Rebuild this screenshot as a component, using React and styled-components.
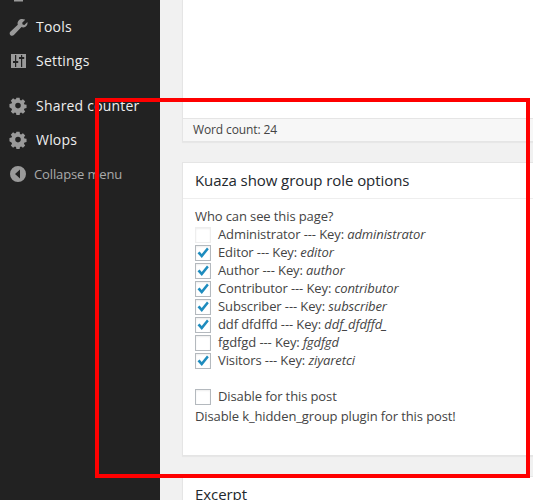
import React from "react";
import styled, { createGlobalStyle } from "styled-components";

const Global = createGlobalStyle`
  html, body {
    margin: 0;
    padding: 0;
    background: #f1f1f1;
  }
  #root {
    height: 500px;
    overflow: hidden;
  }
`;

const Page = styled.div`
  position: relative;
  display: flex;
  width: 533px;
  height: 500px;
  overflow: hidden;
  font-family: "Open Sans", sans-serif;
  font-size: 13px;
  line-height: 18px;
  letter-spacing: -0.11px;
  color: #444;
  background: #f1f1f1;
`;

const Sidebar = styled.nav`
  display: flex;
  flex-direction: column;
  flex: none;
  width: 160px;
  height: 500px;
  padding-top: 10px;
  box-sizing: border-box;
  background: #222;
`;

const MenuItem = styled.div`
  display: flex;
  align-items: center;
  height: 34px;
  margin-top: ${props => props.offset || "0"};
  padding-left: 8px;
  font-size: 14px;
  letter-spacing: 0.2px;
  color: #eee;
`;

const Collapse = styled(MenuItem)`
  font-size: 13px;
  letter-spacing: -0.13px;
  color: #aaa;
`;

const IconSlot = styled.svg`
  flex: none;
  width: 20px;
  height: 20px;
  margin-right: 8px;
  fill: #9a9a9a;
`;

const CollapseIcon = styled(IconSlot)`
  margin-right: 6px;
`;

const Main = styled.main`
  flex: 1;
  min-width: 0;
  padding-left: 22px;
`;

const Card = styled.section`
  box-sizing: border-box;
  width: 400px;
  background: #fff;
  border: 1px solid #e5e5e5;
  border-right: 0;
  box-shadow: 0 1px 1px rgba(0, 0, 0, 0.04);
`;

const EditorCard = styled(Card)`
  display: flex;
  flex-direction: column;
  height: 142px;
  margin-bottom: 20px;
  border-top: 0;
`;

const EditorArea = styled.div`
  flex: 1;
`;

const StatusBar = styled.div`
  display: flex;
  align-items: center;
  height: 22px;
  padding-left: 10px;
  font-size: 12px;
  color: #444;
  background: #f7f7f7;
  border-top: 1px solid #e5e5e5;
`;

const OptionsCard = styled(Card)`
  height: 294px;
  margin-bottom: 20px;
`;

const CardTitle = styled.h2`
  display: flex;
  align-items: center;
  box-sizing: border-box;
  height: 36px;
  margin: 0;
  padding: 0 0 2px 12px;
  font-size: 15px;
  font-weight: 400;
  letter-spacing: -0.07px;
  color: #23282d;
  border-bottom: 1px solid #eee;
`;

const CardBody = styled.div`
  padding: 8px 12px 0;
`;

const Question = styled.div`
  height: 18px;
`;

const RoleList = styled.div`
  display: flex;
  flex-direction: column;
  margin-top: 1px;
  margin-bottom: 18px;
`;

const Row = styled.label`
  display: flex;
  align-items: center;
  height: 18px;
`;

const RowText = styled.span`
  position: relative;
  top: -1px;
`;

const Box = styled.span`
  display: flex;
  align-items: center;
  justify-content: center;
  flex: none;
  box-sizing: border-box;
  width: 16px;
  height: 16px;
  margin-right: 7px;
  background: #fff;
  border: 1px solid ${props => (props.faint ? "#eeeeee" : "#b4b9be")};
  box-shadow: inset 0 1px 2px rgba(0, 0, 0, 0.07);
`;

const Key = styled.em`
  font-style: italic;
`;

const DisableNote = styled.div`
  margin-top: 1px;
`;

const ExcerptTitle = styled(CardTitle)`
  border-bottom: 0;
`;

// red annotation drawn on top of the screenshot
const Annotation = styled.div`
  position: absolute;
  left: 95px;
  top: 98px;
  box-sizing: border-box;
  width: 435px;
  height: 380px;
  border: 4px solid #ff0000;
  pointer-events: none;
`;

const Check = () => (
  <svg width="14" height="14" viewBox="0 0 14 14">
    <path d="M1.5 7.2 L3.6 5.4 L5.7 8 L11 1.6 L12.8 3.2 L5.8 12 Z" fill="#1e8cbe" />
  </svg>
);

// only the foot of this icon shows above the fold
const Users = () => (
  <IconSlot viewBox="0 0 20 20">
    <path d="M6 14h9v4.500H6z" />
  </IconSlot>
);

const Wrench = () => (
  <IconSlot viewBox="0 0 20 20">
    <path d="M16.700 2.600c.2 0 .3 0 .5.1l-3 3 .4 1.800 1.800.5 3-3c.4 2-.3 3.700-1.900 4.700-1.200.8-2.700.9-4 .4L5.900 18c-.9 1-2.400 1.100-3.400.2-1-.9-1.100-2.500-.2-3.500l7.500-6.900c-.5-1.500-.2-3.100.9-4.300 1.500-1.500 3.700-1.900 6-.9z" />
  </IconSlot>
);

const Sliders = () => (
  <IconSlot viewBox="0 0 20 20">
    <path
      fillRule="evenodd"
      d="M3 3h15v14H3z M7 4v6H5v2h2v4h1.200v-4h2v-2h-2V4z M13 4v2h-2v2h2v8h1.200V8h2V6h-2V4z"
    />
  </IconSlot>
);

const Gear = () => (
  <IconSlot viewBox="0 0 20 20">
    <path
      fillRule="evenodd"
      d="M8.200 1.500h3.600l.4 2.400 1.300.6 2-1.400 2.500 2.500-1.400 2 .6 1.300 2.300.4v3.600l-2.300.4-.6 1.300 1.400 2-2.500 2.500-2-1.400-1.300.6-.4 2.200H8.200l-.4-2.200-1.300-.6-2 1.400-2.500-2.500 1.400-2-.6-1.300L.5 12V8.300l2.300-.4.6-1.300-1.400-2L4.500 2l2 1.400 1.300-.6z M10 7a3.100 3.100 0 1 0 0 6.200A3.100 3.100 0 0 0 10 7z"
      transform="translate(1 .5) scale(.9)"
    />
  </IconSlot>
);

const CollapseArrow = () => (
  <CollapseIcon viewBox="0 0 20 20">
    <path
      fillRule="evenodd"
      d="M10 2a8 8 0 1 1 0 16a8 8 0 0 1 0-16z M12 5.500L7 10l5 4.500z"
    />
  </CollapseIcon>
);

const roles = [
  { name: "Administrator", slug: "administrator", checked: false, faint: true },
  { name: "Editor", slug: "editor", checked: true },
  { name: "Author", slug: "author", checked: true },
  { name: "Contributor", slug: "contributor", checked: true },
  { name: "Subscriber", slug: "subscriber", checked: true },
  { name: "ddf dfdffd", slug: "ddf_dfdffd_", checked: true },
  { name: "fgdfgd", slug: "fgdfgd", checked: false },
  { name: "Visitors", slug: "ziyaretci", checked: true }
];

export default function App() {
  return (
    <Page>
      <Global />
      <Sidebar>
        <MenuItem offset="-34px">
          <Users />
        </MenuItem>
        <MenuItem>
          <Wrench />
          Tools
        </MenuItem>
        <MenuItem>
          <Sliders />
          Settings
        </MenuItem>
        <MenuItem offset="11px">
          <Gear />
          Shared counter
        </MenuItem>
        <MenuItem>
          <Gear />
          Wlops
        </MenuItem>
        <Collapse>
          <CollapseArrow />
          Collapse menu
        </Collapse>
      </Sidebar>
      <Main>
        <EditorCard>
          <EditorArea />
          <StatusBar>Word count: 24</StatusBar>
        </EditorCard>
        <OptionsCard>
          <CardTitle>Kuaza show group role options</CardTitle>
          <CardBody>
            <Question>Who can see this page?</Question>
            <RoleList>
              {roles.map(role => (
                <Row key={role.slug}>
                  <Box faint={role.faint}>{role.checked && <Check />}</Box>
                  <RowText>
                    {role.name} --- Key: <Key>{role.slug}</Key>
                  </RowText>
                </Row>
              ))}
            </RoleList>
            <Row>
              <Box />
              <RowText>Disable for this post</RowText>
            </Row>
            <DisableNote>Disable k_hidden_group plugin for this post!</DisableNote>
          </CardBody>
        </OptionsCard>
        <Card>
          <ExcerptTitle>Excerpt</ExcerptTitle>
        </Card>
      </Main>
      <Annotation />
    </Page>
  );
}
